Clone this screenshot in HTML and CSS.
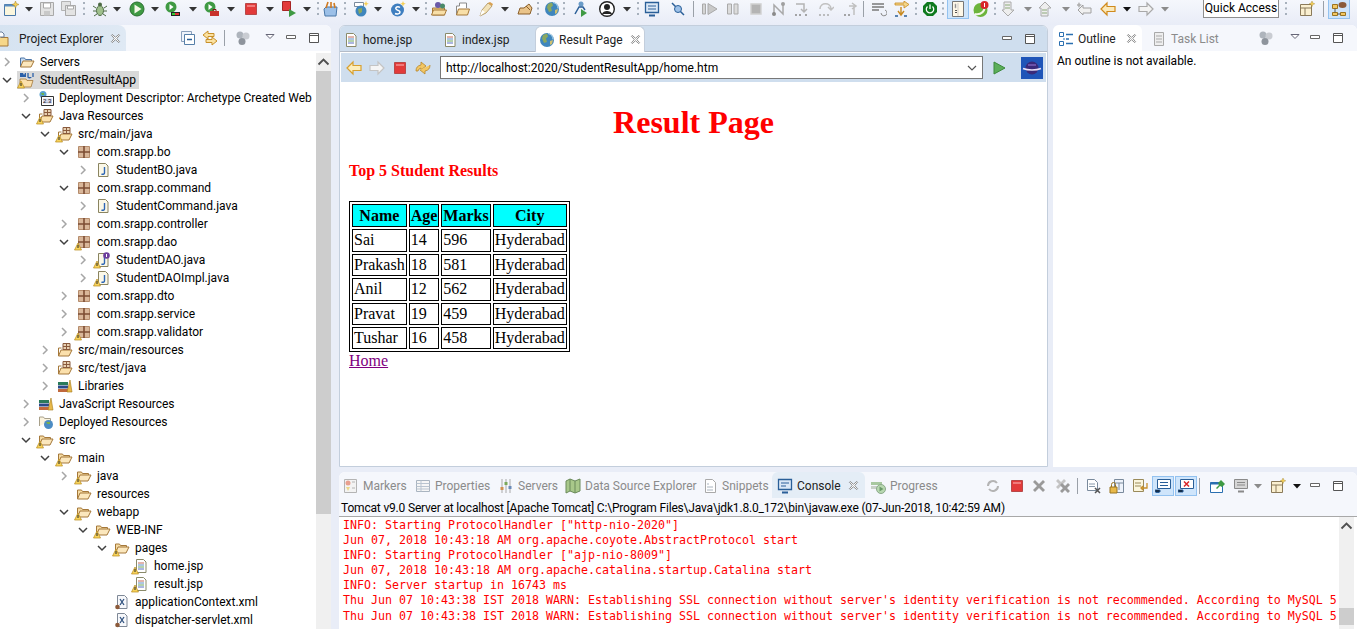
FILE: index.html
```html
<!DOCTYPE html>
<html lang="en">
<head>
    <meta charset="UTF-8">
    <title>Eclipse - Result Page</title>
    <link rel="stylesheet" href="styles.css">
</head>
<body>

<svg class="sprites" xmlns="http://www.w3.org/2000/svg">
    <symbol id="dd" viewBox="0 0 16 16"><path d="M4 6h8l-4 4.500z" fill="#333"/></symbol>
    <symbol id="ddk" viewBox="0 0 16 16"><path d="M4 6h8l-4 4.500z" fill="#111"/></symbol>
    <symbol id="ddg" viewBox="0 0 16 16"><path d="M4 6h8l-4 4.500z" fill="#8b8b8b"/></symbol>
    <symbol id="ddo" viewBox="0 0 16 16"><path d="M4 4.500h8l-4 4z" fill="#fff" stroke="#667"/></symbol>
    <symbol id="dots" viewBox="0 0 16 16"><path d="M8 1v15" stroke="#8f9aa8" stroke-width="1.500" stroke-dasharray="2 3.500"/></symbol>
    <symbol id="sep" viewBox="0 0 16 16"><path d="M8.500 -1v18" stroke="#9aa0a8"/></symbol>
    <symbol id="min" viewBox="0 0 16 16"><path d="M3.500 5.500h9v3h-9z" fill="#fff" stroke="#666"/></symbol>
    <symbol id="max" viewBox="0 0 16 16"><path d="M3.500 3.500h9v9h-9z" fill="#fff" stroke="#555"/><path d="M3.500 5.500h9" stroke="#555"/></symbol>
    <symbol id="close" viewBox="0 0 16 16"><path d="M4 3l4 3.500L12 3l1 1-3.500 4 3.500 4-1 1-4-3.500L4 13l-1-1 3.500-4L3 4z" fill="#fff" stroke="#777"/></symbol>
    <symbol id="chr" viewBox="0 0 12 12"><path d="M4 2l4 4-4 4" fill="none" stroke="#a6a6a6" stroke-width="1.500"/></symbol>
    <symbol id="chd" viewBox="0 0 12 12"><path d="M2 4l4 4 4-4" fill="none" stroke="#404040" stroke-width="1.500"/></symbol>
    <symbol id="chu" viewBox="0 0 12 12"><path d="M2 8l4-4 4 4" fill="none" stroke="#505050" stroke-width="1.500"/></symbol>
    <symbol id="warn" viewBox="0 0 16 16"><path d="M4 8L7.500 15H.5z" fill="#f7d35c" stroke="#b88a1b" stroke-width=".7"/><path d="M4 10v3" stroke="#222"/></symbol>

    <symbol id="folder" viewBox="0 0 16 16"><path d="M1.500 13V4h4l1 1.500h6V7" fill="#f6dca4" stroke="#a5783a"/><path d="M1.500 13l2.500-6h11l-3 6z" fill="#fbe7bd" stroke="#a5783a"/></symbol>
    <symbol id="folderb" viewBox="0 0 16 16"><path d="M1.500 13V4h4l1 1.500h6V7" fill="#c7dbf1" stroke="#4d76a8"/><path d="M1.500 13l2.500-6h11l-3 6z" fill="#fbe7bd" stroke="#a5783a"/></symbol>
    <symbol id="srcf" viewBox="0 0 16 16"><path d="M1.500 14l2.500-6h11l-3 6z" fill="#fbe0ac" stroke="#a5783a"/><path d="M1.500 14V6h3" fill="none" stroke="#a5783a"/><path d="M6 1.500h7v6H6zM6 4.500h7M9.500 1.500v6" fill="#e9d2b4" stroke="#8a5a3c"/></symbol>
    <symbol id="pkg" viewBox="0 0 16 16"><path d="M2.500 2.500h11v11h-11z" fill="#d9b79a" stroke="#b58c6c"/><path d="M2 8h12M8 2v12" stroke="#7c4d34" stroke-width="1.600"/></symbol>
    <symbol id="jfile" viewBox="0 0 16 16"><path d="M3.500 1.500h7l2.500 2.500v10.500h-9.500z" fill="#fbf8e8" stroke="#8a8460"/><path d="M9.500 5v6c0 1.500-2 1.500-3 1" fill="none" stroke="#2e66b5" stroke-width="1.400"/></symbol>
    <symbol id="jint" viewBox="0 0 16 16"><use href="#jfile"/><circle cx="11.500" cy="3.500" r="3.300" fill="#6c3d9c"/><path d="M11.500 2v3" stroke="#fff"/></symbol>
    <symbol id="jsp" viewBox="0 0 16 16"><path d="M3.500 1.500h7l2.500 2.500v10.500h-9.500z" fill="#fff" stroke="#8a8a6a"/><path d="M5 5h6" stroke="#c66b5a"/><path d="M5 7h6" stroke="#5a8fc6"/><path d="M5 9h6" stroke="#6aa55a"/><path d="M5 11h6" stroke="#5a6fc6"/></symbol>
    <symbol id="xml" viewBox="0 0 16 16"><path d="M3.500 1.500h7l2.500 2.500v10.500h-9.500z" fill="#f7f8fb" stroke="#7e8896"/><path d="M6 5l4 6M10 5l-4 6" stroke="#30527f" stroke-width="1.300"/><circle cx="3.500" cy="13" r="2.300" fill="#8c5a3a"/></symbol>
    <symbol id="books" viewBox="0 0 16 16"><path d="M1 4h10v3H1z" fill="#2a7a5a"/><path d="M1 7.500h10v3H1z" fill="#2a4a8a"/><path d="M1 11h10v3H1z" fill="#c0683c"/><path d="M10 14l3-12 2 12z" fill="#e8b94a" stroke="#a57a1a" stroke-width=".6"/></symbol>
    <symbol id="deploy" viewBox="0 0 16 16"><circle cx="5" cy="4.500" r="3.500" fill="#5aa2d0"/><path d="M3 3h3v2H4z" fill="#6cb04c"/><path d="M3.500 6.500h12v9h-12z" fill="#fff" stroke="#333"/><path d="M5 8.500h9v5H5z" fill="#d8d8e8"/><text x="5" y="13.200" font-size="6" font-family="Liberation Sans" fill="#112">2.3</text></symbol>
    <symbol id="dep" viewBox="0 0 16 16"><path d="M1.500 12V3h4l1 1.500h6V7" fill="#fbf3dd" stroke="#a8a08a"/><circle cx="10.500" cy="10.500" r="4.500" fill="#4c8cc4"/><path d="M8 8h4v2H9.500z" fill="#7ab04c"/></symbol>
    <symbol id="app" viewBox="0 0 16 16"><path d="M1 7h6l1 1.500h6L12 15H1z" fill="#fbe0ac" stroke="#a5783a" stroke-width=".8"/><path d="M1 1h3l1 2 1-2h1v4H1z" fill="#2a5fa8"/><path d="M9 1v4c0 1 3 1 3 0M14 1v4" fill="none" stroke="#2a5fa8" stroke-width="1.300"/></symbol>
    <symbol id="project" viewBox="0 0 16 16"><path d="M-3 5h6l1 1.500h7V15H-3z" fill="#f6d78a" stroke="#a5783a"/><path d="M0 1h5l2 2v3H0z" fill="#fff" stroke="#6a7f9c"/></symbol>

    <symbol id="globe" viewBox="0 0 16 16"><circle cx="8" cy="8" r="7" fill="#3f86bd"/><path d="M4 3l4-1.500 1 3-2 2 1 3.500-3 1-2-4.500z" fill="#8aa860"/><path d="M11 9l3-1-1 4-2 1z" fill="#d0c070"/><path d="M9 1.500c3 .5 5 3 5 6" fill="none" stroke="#b4d8ee"/></symbol>
    <symbol id="newwin" viewBox="0 0 16 16"><path d="M1.500 3.500h11v11h-11z" fill="#fbf6dd" stroke="#4a78a8"/><path d="M1.500 3.500h11v2h-11z" fill="#5a8cc0"/><path d="M12.500 0l1 2.500 2.500 1-2.500 1-1 2.500-1-2.500-2.500-1 2.500-1z" fill="#f5cf55" stroke="#a5852a" stroke-width=".5"/></symbol>
    <symbol id="save" viewBox="0 0 16 16"><path d="M1.500 1.500h13v13h-13z" fill="#e3e3e3" stroke="#a9a9a9"/><path d="M4.500 2h7v5h-7z" fill="#fff" stroke="#a9a9a9"/><path d="M5 10h6v4.500H5z" fill="#c9c9c9"/></symbol>
    <symbol id="saveall" viewBox="0 0 16 16"><path d="M.5 .5h9v9h-9z" fill="#e3e3e3" stroke="#b3b3b3"/><path d="M4.500 4.500h10v10h-10z" fill="#e3e3e3" stroke="#a9a9a9"/><path d="M6.500 5h6v3h-6z" fill="#fff" stroke="#a9a9a9"/></symbol>
    <symbol id="bug" viewBox="0 0 16 16"><ellipse cx="8" cy="9.500" rx="3.500" ry="5" fill="#9fc08c" stroke="#4c6a44"/><circle cx="8" cy="3.500" r="2" fill="#4c6a44"/><path d="M1 5l3 2M15 5l-3 2M1 10h3M15 10h-3M2 15l3-2M14 15l-3-2" stroke="#4c6a44"/></symbol>
    <symbol id="run" viewBox="0 0 16 16"><circle cx="8" cy="8" r="7" fill="#3f9a43" stroke="#2a6f30"/><path d="M5.500 3.500l7 4.500-7 4.500z" fill="#f4f8e8"/></symbol>
    <symbol id="cov" viewBox="0 0 16 16"><circle cx="6" cy="6" r="5.500" fill="#3f9a43"/><path d="M4.500 3l4 3-4 3z" fill="#fff"/><path d="M6 11h9v4H6z" fill="#222"/><path d="M7 12h3v2H7z" fill="#3c3"/><path d="M10 12h4v2h-4z" fill="#d33"/></symbol>
    <symbol id="tool" viewBox="0 0 16 16"><circle cx="6" cy="6" r="5.500" fill="#3f9a43"/><path d="M4.500 3l4 3-4 3z" fill="#fff"/><path d="M6 10h9v5H6z" fill="#c8322c"/><path d="M9 10V8.500h3V10" fill="none" stroke="#7a1a16"/></symbol>
    <symbol id="stop" viewBox="0 0 16 16"><path d="M2.500 2.500h11v11h-11z" fill="#e23a3a" stroke="#b84848"/><path d="M4 4h8v2H4z" fill="#f07a7a"/></symbol>
    <symbol id="stopgo" viewBox="0 0 16 16"><path d="M1.500 .5h8v9h-8z" fill="#e23a3a" stroke="#a82424"/><path d="M8 8l7 4-7 4z" fill="#3f9a43"/></symbol>
    <symbol id="ant" viewBox="0 0 16 16"><path d="M1 8l2-2h11l-1 9H2z" fill="#9cc0e8" stroke="#4a78a8"/><path d="M5 1l-2 6M8 1v6M11 2l1 5" stroke="#d07a20" stroke-width="1.600"/></symbol>
    <symbol id="globenew" viewBox="0 0 16 16"><path d="M1.500 1.500h9v4h-9z" fill="#fff" stroke="#7a8a9c"/><circle cx="8" cy="10" r="5.500" fill="#3f86bd"/><path d="M5 8l4-1v4l-3 2z" fill="#8aa860"/><path d="M13 0l.8 2 2 .8-2 .8-.8 2-.8-2-2-.8 2-.8z" fill="#f5cf55"/></symbol>
    <symbol id="snew" viewBox="0 0 16 16"><circle cx="7.500" cy="9" r="6.500" fill="#3f7fc0"/><path d="M10 6.500C8 5 5 6 6 8s4 1 4 3-3 2.500-5 1.500" fill="none" stroke="#fff" stroke-width="1.500"/><path d="M13 0l.8 2 2 .8-2 .8-.8 2-.8-2-2-.8 2-.8z" fill="#f5cf55"/></symbol>
    <symbol id="fpurple" viewBox="0 0 16 16"><path d="M1.500 14V7h12v7z" fill="#f2cf84" stroke="#a5783a"/><circle cx="7" cy="4" r="3" fill="#6a5aa8"/><circle cx="11.500" cy="5" r="2.500" fill="#4a8a6a"/><path d="M.5 14l2-5h13l-2 5z" fill="#f8dfa8" stroke="#a5783a"/></symbol>
    <symbol id="fopen" viewBox="0 0 16 16"><path d="M1.500 14V5h3V2h7v5" fill="#fff" stroke="#8a8a8a"/><path d="M1.500 14l2-6h11l-2 6z" fill="#f8dfa8" stroke="#a5783a"/></symbol>
    <symbol id="pen" viewBox="0 0 16 16"><path d="M2 15l2-6 6-7 4 3-6 7z" fill="#f3e3b8" stroke="#b8a070"/><path d="M10 2l4 3 1-2-3-2z" fill="#d8a050"/><path d="M2 15l2-6 3 2z" fill="#fff"/></symbol>
    <symbol id="ftag" viewBox="0 0 16 16"><path d="M1 13l2-6h4l5-4 3 4-2 6z" fill="#eac48a" stroke="#8a5f2a"/><path d="M9 5l4 4" stroke="#8a5f2a"/></symbol>
    <symbol id="runp" viewBox="0 0 16 16"><circle cx="9" cy="3" r="2.500" fill="#6a9cc8"/><path d="M3 13l4-7h4l2 3" fill="none" stroke="#2a5f98" stroke-width="1.500"/><path d="M9 8l6 4-6 4z" fill="#3f9a43"/></symbol>
    <symbol id="person" viewBox="0 0 16 16"><circle cx="8" cy="8" r="7.300" fill="#fff" stroke="#222" stroke-width="1.400"/><circle cx="8" cy="6" r="3" fill="#222"/><path d="M3 13c1-4 9-4 10 0z" fill="#222"/></symbol>
    <symbol id="monitor" viewBox="0 0 16 16"><path d="M1.500 1.500h13v10h-13z" fill="#dbe8f6" stroke="#2a5f98" stroke-width="1.300"/><path d="M4 5h8M4 8h8" stroke="#2a5f98"/><path d="M5 14.500h6" stroke="#2a5f98" stroke-width="2"/></symbol>
    <symbol id="slash" viewBox="0 0 16 16"><path d="M2 2l12 12" stroke="#2a5f98" stroke-width="1.500"/><circle cx="8" cy="8" r="3.500" fill="#9cc0e8" stroke="#2a5f98"/></symbol>

    <symbol id="resume" viewBox="0 0 16 16"><path d="M.5 3h3v10h-3z" fill="#d4d4d4" stroke="#a9a9a9"/><path d="M6 2.500l9 5.500-9 5.500z" fill="#c9c9c9" stroke="#a9a9a9"/></symbol>
    <symbol id="pause" viewBox="0 0 16 16"><path d="M2.500 3h4v10h-4zM9 3h4v10H9z" fill="#dcdcdc" stroke="#a9a9a9"/></symbol>
    <symbol id="stopg" viewBox="0 0 16 16"><path d="M3 3h10v10H3z" fill="#b4b4b4" stroke="#d0d0d0" stroke-width="1.400"/></symbol>
    <symbol id="disc" viewBox="0 0 16 16"><path d="M3 14V4l9 9V2" fill="none" stroke="#a9a9a9" stroke-width="1.500"/><circle cx="12" cy="3" r="2" fill="#a0a0a0"/><circle cx="3" cy="13" r="2" fill="#8a8a8a"/></symbol>
    <symbol id="stepin" viewBox="0 0 16 16"><path d="M2 3h8v7M7 8l3 3 3-3" fill="none" stroke="#b4b4b4" stroke-width="1.500"/><path d="M1 14h2M5 14h2M11 14h2" stroke="#8a8a8a" stroke-width="1.500"/></symbol>
    <symbol id="stepov" viewBox="0 0 16 16"><path d="M2 8c0-7 11-7 11 0M10 6l3 3 3-3" fill="none" stroke="#c0c0c0" stroke-width="1.500"/><path d="M1 14h2M5 14h2M9 14h2" stroke="#aaa" stroke-width="1.500"/></symbol>
    <symbol id="stepret" viewBox="0 0 16 16"><path d="M11 14V5H6M9 2l4 3-4 3" fill="none" stroke="#c0c0c0" stroke-width="1.500"/><path d="M1 14h2M5 14h2" stroke="#8a8a8a" stroke-width="1.500"/></symbol>
    <symbol id="lines" viewBox="0 0 16 16"><path d="M1 3h12M1 6h12M1 9h7" stroke="#7a7a7a" stroke-width="1.500"/><path d="M10 12a3 3 0 1 0 4-3" fill="none" stroke="#8a8a8a"/></symbol>
    <symbol id="ostep" viewBox="0 0 16 16"><path d="M1 4h9v3l5-3.500L10 0v2H1z" fill="#f3d68a" stroke="#c88a20" stroke-width=".8"/><path d="M7 6v7M4 10l3 4 3-4" fill="none" stroke="#c88a20" stroke-width="1.400"/><path d="M1 15h3M10 15h3" stroke="#2a5f98" stroke-width="1.400"/></symbol>
    <symbol id="power" viewBox="0 0 16 16"><path d="M5 1h6l4 4v6l-4 4H5l-4-4V5z" fill="#0f7a1e"/><path d="M5.500 5.500a3.700 3.700 0 1 0 5 0M8 3.500v4.500" fill="none" stroke="#fff" stroke-width="1.300"/></symbol>
    <symbol id="numbered" viewBox="0 0 16 16"><path d="M2.500 .5h11v15h-11z" fill="#fff8e8" stroke="#777"/><path d="M5 3h1v4H5zM8 2v13" fill="#555" stroke="#bbb" stroke-width=".7"/><path d="M5 9h2v1H5zM5 11h2v1H5z" fill="#555"/></symbol>
    <symbol id="spring" viewBox="0 0 16 16"><circle cx="7.500" cy="9" r="7" fill="#6cb43c"/><path d="M2 13c6 1 9-2 10-7" fill="none" stroke="#f4f8e8" stroke-width="2"/><circle cx="11.500" cy="4" r="4" fill="#d8262a"/><path d="M11.500 2v4" stroke="#fff"/></symbol>
    <symbol id="down" viewBox="0 0 16 16"><path d="M3 1h7v8h3l-6 6-6-6h2z" fill="#eee" stroke="#aaa"/><path d="M4 4h5M4 7h5" stroke="#8aa878"/></symbol>
    <symbol id="up" viewBox="0 0 16 16"><path d="M3 15h7V7h3L7 1 1 7h2z" fill="#eee" stroke="#aaa"/><path d="M4 9h5M4 12h5" stroke="#8aa878"/></symbol>
    <symbol id="backg" viewBox="0 0 16 16"><path d="M1 9l5-5v3h8v5H6v2z" fill="#f0f0f0" stroke="#a0a0a0"/><path d="M2 1l1 2 2 1-2 1-1 2-1-2-2-1 2-1z" fill="#b0b0b0"/></symbol>
    <symbol id="left" viewBox="0 0 16 16"><path d="M1 8l6-6v3.500h8v5H7V14z" fill="#fbe9ba" stroke="#d08a1c" stroke-width="1.200"/></symbol>
    <symbol id="right" viewBox="0 0 16 16"><path d="M15 8L9 2v3.500H1v5h8V14z" fill="#f3f3f3" stroke="#a9a9a9" stroke-width="1.200"/></symbol>
    <symbol id="perspective" viewBox="0 0 16 16"><path d="M1.500 3.500h11v11h-11z" fill="#fbf0d0" stroke="#8a7a5a"/><path d="M1.500 7h11M6 7v7.500" stroke="#8a7a5a"/><path d="M13 0l.8 2 2 .8-2 .8-.8 2-.8-2-2-.8 2-.8z" fill="#f5cf55" stroke="#a5852a" stroke-width=".4"/></symbol>
    <symbol id="jee" viewBox="0 0 16 16"><path d="M1.500 3.500h5v4h-5zM1.500 11.500h5v3h-5zM9.500 11.500h5v3h-5z" fill="#f3c763" stroke="#9a7420"/><path d="M4 7.500v4M6.500 13h3" stroke="#555"/><ellipse cx="11.500" cy="4" rx="4" ry="3" fill="#8a5a3a"/></symbol>

    <symbol id="collapse" viewBox="0 0 16 16"><path d="M1.500 1.500h10v10h-10z" fill="#eef3fb" stroke="#8aa0bc"/><path d="M4.500 4.500h10v10h-10z" fill="#fff" stroke="#567fa8"/><path d="M7 9.500h5" stroke="#2a5f98" stroke-width="1.400"/></symbol>
    <symbol id="link" viewBox="0 0 16 16"><path d="M1 5l5-4v2.500h6v3H6V9z" fill="#fbe2a2" stroke="#c8902a"/><path d="M15 11l-5-4v2.500H4v3h6V15z" fill="#fbe2a2" stroke="#c8902a"/></symbol>
    <symbol id="balls" viewBox="0 0 16 16"><circle cx="5" cy="5" r="3.500" fill="#aeb4bc"/><circle cx="11" cy="6" r="3.500" fill="#c9ccd2"/><circle cx="7" cy="11.500" r="3.500" fill="#8e949c"/></symbol>
    <symbol id="outline" viewBox="0 0 16 16"><path d="M1.500 1.500h4v4h-4zM1.500 10.500h4v4h-4z" fill="#fff" stroke="#2a6fb0"/><path d="M8 3.500h7M8 8h3M8 12.500h7" stroke="#2a6fb0" stroke-width="1.300"/><path d="M5 8h2" stroke="#2a6fb0"/></symbol>
    <symbol id="task" viewBox="0 0 16 16"><path d="M3.500 1.500h9v13h-9z" fill="#eee" stroke="#a9a9a9"/><path d="M5 5h6M5 8h6M5 11h6" stroke="#a9a9a9"/></symbol>
    <symbol id="markers" viewBox="0 0 16 16"><path d="M1.500 1.500h12v13h-12z" fill="#f3f3f3" stroke="#b4b4b4"/><circle cx="5" cy="5" r="2.500" fill="#e8a090"/><path d="M3 9h4l-2 4z" fill="#ecd88a"/><path d="M9 4h3M9 10h3" stroke="#b4b4b4"/></symbol>
    <symbol id="props" viewBox="0 0 16 16"><path d="M1.500 2.500h13v11h-13z" fill="#f6f6f6" stroke="#a9b4c0"/><path d="M1.500 5.500h13M1.500 8.500h13M1.500 11h13M6 2.500v11" stroke="#b9c4d0"/></symbol>
    <symbol id="servers" viewBox="0 0 16 16"><path d="M4 1v14M8 1v14M12 1v14" stroke="#a9a9a9"/><path d="M2.500 9h3v3h-3z" fill="#d09050"/><path d="M6.500 4h3v3h-3z" fill="#7aa85a"/><path d="M10.500 8h3v3h-3z" fill="#6a8ab8"/></symbol>
    <symbol id="dse" viewBox="0 0 16 16"><path d="M1 3l4-2 5 2 5-2v12l-5 2-5-2-4 2z" fill="#a8c88a" stroke="#6a8a5a"/><path d="M5 1v12M10 3v12" stroke="#6a8a5a"/></symbol>
    <symbol id="snip" viewBox="0 0 16 16"><path d="M3.500 1.500h7l3 3v10h-10z" fill="#fff" stroke="#a9a9a9"/><path d="M5 6h2M5 9h6M5 12h6" stroke="#a9b4c0"/></symbol>
    <symbol id="console" viewBox="0 0 16 16"><path d="M1.500 1.500h13v10h-13z" fill="#dbe8f6" stroke="#2a5f98" stroke-width="1.300"/><path d="M4 5h8M4 8h5" stroke="#2a5f98"/><path d="M5 14.500h6" stroke="#2a5f98" stroke-width="2"/></symbol>
    <symbol id="progress" viewBox="0 0 16 16"><path d="M1 4h11v3H1z" fill="#a8c8a0"/><path d="M1 8h6v3H1z" fill="#c8d0c8"/><circle cx="11" cy="11" r="4.500" fill="#b8d8b0" stroke="#8aa88a"/><path d="M9.500 8.500l4 2.500-4 2.500z" fill="#6a9a6a"/></symbol>
    <symbol id="sync" viewBox="0 0 16 16"><path d="M3 8a5 5 0 0 1 9-3M13 8a5 5 0 0 1-9 3" fill="none" stroke="#b4b4b4" stroke-width="2"/></symbol>
    <symbol id="xg" viewBox="0 0 16 16"><path d="M2 4l2-2 4 4 4-4 2 2-4 4 4 4-2 2-4-4-4 4-2-2 4-4z" fill="#9a9a9a"/></symbol>
    <symbol id="xxg" viewBox="0 0 16 16"><path d="M1 3l2-2 3 3 3-3 2 2-3 3 3 3-2 2-3-3-3 3-2-2 3-3z" fill="#c4c4c4"/><path d="M5 7l2-2 3 3 3-3 2 2-3 3 3 3-2 2-3-3-3 3-2-2 3-3z" fill="#9a9a9a"/></symbol>
    <symbol id="cdoc" viewBox="0 0 16 16"><path d="M2.500 1.500h7l3 3v8h-10z" fill="#fff" stroke="#7a8a9c"/><path d="M4 6h6M4 8.500h6" stroke="#8a9aac"/><path d="M10 10l5 5M15 10l-5 5" stroke="#555" stroke-width="1.500"/></symbol>
    <symbol id="clock" viewBox="0 0 16 16"><path d="M5.500 1.500h9v13h-9z" fill="#eef3fb" stroke="#7a8a9c"/><path d="M10 5v7M5.500 5h9" stroke="#7a8a9c"/><path d="M1 9h7v6H1z" fill="#e8b94a" stroke="#9a7420"/><path d="M2.500 9V6.500a2 2 0 0 1 4 0V9" fill="none" stroke="#9a7420"/></symbol>
    <symbol id="cword" viewBox="0 0 16 16"><path d="M1.500 1.500h10v12h-10z" fill="#fbf6dd" stroke="#9a8a5a"/><path d="M3 5h6M3 8h6" stroke="#9a8a5a"/><path d="M15 5v5H9M11 8l-2 2 2 2" fill="none" stroke="#c8902a" stroke-width="1.300"/></symbol>
    <symbol id="cout" viewBox="0 0 16 16"><path d="M2.500 1.500h13v9h-13z" fill="#fff" stroke="#2a5f98"/><path d="M5 4.500h8M5 7.500h8" stroke="#2a5f98"/><path d="M0 12h5v2H0zM1 14.500h3" stroke="#2a5f98"/></symbol>
    <symbol id="cerr" viewBox="0 0 16 16"><path d="M2.500 1.500h13v9h-13z" fill="#fff" stroke="#2a5f98"/><path d="M6 3.500l5 5M11 3.500l-5 5" stroke="#d8262a" stroke-width="1.500"/><path d="M0 12h5v2H0z" stroke="#2a5f98"/></symbol>
    <symbol id="pin" viewBox="0 0 16 16"><path d="M1.500 4.500h12v10h-12z" fill="#fff" stroke="#2a6fb0"/><path d="M1.500 4.500h12v2h-12z" fill="#2a6fb0"/><path d="M7 10l3-3-1-2 3-3 4 4-3 3-2-1-3 3z" fill="#3f9a43"/></symbol>
    <symbol id="dispg" viewBox="0 0 16 16"><path d="M1.500 1.500h13v9h-13z" fill="#d6d6d6" stroke="#8a8a8a"/><path d="M4 4.500h8M4 7h8" stroke="#8a8a8a"/><path d="M5 13.500h6" stroke="#8a8a8a" stroke-width="2"/></symbol>
    <symbol id="back" viewBox="0 0 16 16"><path d="M1 8l6-6v3.500h8v5H7V14z" fill="#fdeebc" stroke="#d8a030" stroke-width="1.200"/></symbol>
    <symbol id="fwd" viewBox="0 0 16 16"><path d="M15 8L9 2v3.500H1v5h8V14z" fill="#f5f5f5" stroke="#c4c4c4" stroke-width="1.200"/></symbol>
    <symbol id="refresh" viewBox="0 0 16 16"><path d="M1 11a6 6 0 0 1 5-6V2l5 4-5 4V8a4 4 0 0 0-3 3z" fill="#f3c763" stroke="#b8862a" stroke-width=".8"/><path d="M15 5a6 6 0 0 1-5 6v3l-5-4" fill="#f3c763" stroke="#b8862a" stroke-width=".8"/></symbol>
    <symbol id="go" viewBox="0 0 16 16"><path d="M3 2l11 6-11 6z" fill="#5cae5a" stroke="#3a8a3a"/></symbol>
    <symbol id="eclipse" viewBox="0 0 22 22"><path d="M0 0h22v22H0z" fill="#1f55b8"/><circle cx="11" cy="11" r="6.500" fill="#3a2a7a"/><path d="M2 11.500c5 2 13 2 18 0" fill="none" stroke="#e8e0f8" stroke-width="1.500"/><path d="M7 8h8" stroke="#9a7ad8"/></symbol>
</svg>

<div class="ide">
    <div class="toolbar">
        <div class="tool-icons">
            <svg class="ic"><use href="#newwin"/></svg><svg class="ic"><use href="#dd"/></svg><svg class="ic"><use href="#save"/></svg><svg class="ic"><use href="#saveall"/></svg><svg class="ic"><use href="#dots"/></svg>
            <svg class="ic"><use href="#bug"/></svg><svg class="ic"><use href="#dd"/></svg><svg class="ic"><use href="#run"/></svg><svg class="ic"><use href="#dd"/></svg><svg class="ic"><use href="#cov"/></svg><svg class="ic"><use href="#dd"/></svg><svg class="ic"><use href="#tool"/></svg><svg class="ic"><use href="#dd"/></svg><svg class="ic"><use href="#stop"/></svg><svg class="ic"><use href="#dd"/></svg><svg class="ic"><use href="#stopgo"/></svg><svg class="ic"><use href="#dd"/></svg><svg class="ic"><use href="#dots"/></svg>
            <svg class="ic"><use href="#ant"/></svg><svg class="ic"><use href="#dots"/></svg>
            <svg class="ic"><use href="#globenew"/></svg><svg class="ic"><use href="#dd"/></svg><svg class="ic"><use href="#snew"/></svg><svg class="ic"><use href="#dd"/></svg><svg class="ic"><use href="#dots"/></svg>
            <svg class="ic"><use href="#fpurple"/></svg><svg class="ic"><use href="#fopen"/></svg><svg class="ic"><use href="#pen"/></svg><svg class="ic"><use href="#dd"/></svg><svg class="ic"><use href="#ftag"/></svg><svg class="ic"><use href="#dots"/></svg>
            <svg class="ic"><use href="#globe"/></svg><svg class="ic"><use href="#dots"/></svg>
            <svg class="ic"><use href="#runp"/></svg><svg class="ic"><use href="#person"/></svg><svg class="ic"><use href="#dd"/></svg><svg class="ic"><use href="#dots"/></svg>
            <svg class="ic"><use href="#monitor"/></svg><svg class="ic"><use href="#slash"/></svg><svg class="ic"><use href="#sep"/></svg>
            <svg class="ic"><use href="#resume"/></svg><svg class="ic"><use href="#pause"/></svg><svg class="ic"><use href="#stopg"/></svg><svg class="ic"><use href="#disc"/></svg><svg class="ic"><use href="#stepin"/></svg><svg class="ic"><use href="#stepov"/></svg><svg class="ic"><use href="#stepret"/></svg><svg class="ic"><use href="#sep"/></svg>
            <svg class="ic"><use href="#lines"/></svg><svg class="ic"><use href="#ostep"/></svg><svg class="ic"><use href="#dots"/></svg>
            <svg class="ic"><use href="#power"/></svg><svg class="ic"><use href="#dots"/></svg>
            <span class="toggle"><svg class="ic"><use href="#numbered"/></svg></span><svg class="ic"><use href="#spring"/></svg><svg class="ic"><use href="#dots"/></svg>
            <svg class="ic"><use href="#down"/></svg><svg class="ic"><use href="#ddg"/></svg><svg class="ic"><use href="#up"/></svg><svg class="ic"><use href="#ddg"/></svg><svg class="ic"><use href="#backg"/></svg><svg class="ic"><use href="#left"/></svg><svg class="ic"><use href="#ddk"/></svg><svg class="ic"><use href="#right"/></svg><svg class="ic"><use href="#ddg"/></svg>
        </div>
        <div class="quick-access">Quick Access</div>
        <svg class="ic"><use href="#dots"/></svg>
        <svg class="ic perspective"><use href="#perspective"/></svg>
        <svg class="ic"><use href="#sep"/></svg>
        <span class="toggle"><svg class="ic"><use href="#jee"/></svg></span>
    </div>

    <div class="workspace">
        <section class="panel explorer">
            <div class="tabbar">
                <div class="tab active first"><svg class="ic"><use href="#project"/></svg><span>Project Explorer</span><svg class="ic x"><use href="#close"/></svg></div>
                <div class="view-tools explorer-tools">
                    <svg class="ic"><use href="#collapse"/></svg><svg class="ic"><use href="#link"/></svg><svg class="ic"><use href="#sep"/></svg><svg class="ic"><use href="#balls"/></svg><svg class="ic"><use href="#ddo"/></svg><svg class="ic"><use href="#min"/></svg><svg class="ic"><use href="#max"/></svg>
                </div>
            </div>
            <div class="tree-wrap">
                <ul class="tree">
                    <li class="row"><svg class="ch"><use href="#chr"/></svg><svg class="ic"><use href="#folderb"/></svg><span>Servers</span></li>
                    <li class="row"><svg class="ch"><use href="#chd"/></svg><span class="iw"><svg class="ic"><use href="#app"/></svg><svg class="ic w"><use href="#warn"/></svg></span><span class="selected">StudentResultApp</span></li>
                    <li class="row l1"><svg class="ch"><use href="#chr"/></svg><svg class="ic"><use href="#deploy"/></svg><span>Deployment Descriptor: Archetype Created Web</span></li>
                    <li class="row l1"><svg class="ch"><use href="#chd"/></svg><span class="iw"><svg class="ic"><use href="#srcf"/></svg><svg class="ic w"><use href="#warn"/></svg></span><span>Java Resources</span></li>
                    <li class="row l2"><svg class="ch"><use href="#chd"/></svg><span class="iw"><svg class="ic"><use href="#srcf"/></svg><svg class="ic w"><use href="#warn"/></svg></span><span>src/main/java</span></li>
                    <li class="row l3"><svg class="ch"><use href="#chd"/></svg><svg class="ic"><use href="#pkg"/></svg><span>com.srapp.bo</span></li>
                    <li class="row l4"><svg class="ch"><use href="#chr"/></svg><svg class="ic"><use href="#jfile"/></svg><span>StudentBO.java</span></li>
                    <li class="row l3"><svg class="ch"><use href="#chd"/></svg><svg class="ic"><use href="#pkg"/></svg><span>com.srapp.command</span></li>
                    <li class="row l4"><svg class="ch"><use href="#chr"/></svg><svg class="ic"><use href="#jfile"/></svg><span>StudentCommand.java</span></li>
                    <li class="row l3"><svg class="ch"><use href="#chr"/></svg><svg class="ic"><use href="#pkg"/></svg><span>com.srapp.controller</span></li>
                    <li class="row l3"><svg class="ch"><use href="#chd"/></svg><span class="iw"><svg class="ic"><use href="#pkg"/></svg><svg class="ic w"><use href="#warn"/></svg></span><span>com.srapp.dao</span></li>
                    <li class="row l4"><svg class="ch"><use href="#chr"/></svg><span class="iw"><svg class="ic"><use href="#jint"/></svg><svg class="ic w"><use href="#warn"/></svg></span><span>StudentDAO.java</span></li>
                    <li class="row l4"><svg class="ch"><use href="#chr"/></svg><span class="iw"><svg class="ic"><use href="#jfile"/></svg><svg class="ic w"><use href="#warn"/></svg></span><span>StudentDAOImpl.java</span></li>
                    <li class="row l3"><svg class="ch"><use href="#chr"/></svg><svg class="ic"><use href="#pkg"/></svg><span>com.srapp.dto</span></li>
                    <li class="row l3"><svg class="ch"><use href="#chr"/></svg><svg class="ic"><use href="#pkg"/></svg><span>com.srapp.service</span></li>
                    <li class="row l3"><svg class="ch"><use href="#chr"/></svg><span class="iw"><svg class="ic"><use href="#pkg"/></svg><svg class="ic w"><use href="#warn"/></svg></span><span>com.srapp.validator</span></li>
                    <li class="row l2"><svg class="ch"><use href="#chr"/></svg><svg class="ic"><use href="#srcf"/></svg><span>src/main/resources</span></li>
                    <li class="row l2"><svg class="ch"><use href="#chr"/></svg><svg class="ic"><use href="#srcf"/></svg><span>src/test/java</span></li>
                    <li class="row l2"><svg class="ch"><use href="#chr"/></svg><svg class="ic"><use href="#books"/></svg><span>Libraries</span></li>
                    <li class="row l1"><svg class="ch"><use href="#chr"/></svg><svg class="ic"><use href="#books"/></svg><span>JavaScript Resources</span></li>
                    <li class="row l1"><svg class="ch"><use href="#chr"/></svg><svg class="ic"><use href="#dep"/></svg><span>Deployed Resources</span></li>
                    <li class="row l1"><svg class="ch"><use href="#chd"/></svg><span class="iw"><svg class="ic"><use href="#folder"/></svg><svg class="ic w"><use href="#warn"/></svg></span><span>src</span></li>
                    <li class="row l2"><svg class="ch"><use href="#chd"/></svg><span class="iw"><svg class="ic"><use href="#folder"/></svg><svg class="ic w"><use href="#warn"/></svg></span><span>main</span></li>
                    <li class="row l3"><svg class="ch"><use href="#chr"/></svg><span class="iw"><svg class="ic"><use href="#folder"/></svg><svg class="ic w"><use href="#warn"/></svg></span><span>java</span></li>
                    <li class="row l3"><span class="ch"></span><svg class="ic"><use href="#folder"/></svg><span>resources</span></li>
                    <li class="row l3"><svg class="ch"><use href="#chd"/></svg><span class="iw"><svg class="ic"><use href="#folder"/></svg><svg class="ic w"><use href="#warn"/></svg></span><span>webapp</span></li>
                    <li class="row l4"><svg class="ch"><use href="#chd"/></svg><span class="iw"><svg class="ic"><use href="#folder"/></svg><svg class="ic w"><use href="#warn"/></svg></span><span>WEB-INF</span></li>
                    <li class="row l5"><svg class="ch"><use href="#chd"/></svg><span class="iw"><svg class="ic"><use href="#folder"/></svg><svg class="ic w"><use href="#warn"/></svg></span><span>pages</span></li>
                    <li class="row l6"><span class="ch"></span><span class="iw"><svg class="ic"><use href="#jsp"/></svg><svg class="ic w"><use href="#warn"/></svg></span><span>home.jsp</span></li>
                    <li class="row l6"><span class="ch"></span><span class="iw"><svg class="ic"><use href="#jsp"/></svg><svg class="ic w"><use href="#warn"/></svg></span><span>result.jsp</span></li>
                    <li class="row l5"><span class="ch"></span><svg class="ic"><use href="#xml"/></svg><span>applicationContext.xml</span></li>
                    <li class="row l5"><span class="ch"></span><svg class="ic"><use href="#xml"/></svg><span>dispatcher-servlet.xml</span></li>
                </ul>
                <div class="vscroll tree-scroll"><svg class="arrow"><use href="#chu"/></svg><div class="thumb"></div></div>
            </div>
        </section>

        <section class="panel editor">
            <div class="tabbar blue">
                <div class="tab file home-tab"><svg class="ic"><use href="#jsp"/></svg><span>home.jsp</span></div>
                <div class="tab file"><svg class="ic"><use href="#jsp"/></svg><span>index.jsp</span></div>
                <div class="tab active result"><svg class="ic"><use href="#globe"/></svg><span>Result Page</span><svg class="ic x"><use href="#close"/></svg></div>
                <div class="view-tools editor-tools"><svg class="ic"><use href="#min"/></svg><svg class="ic"><use href="#max"/></svg></div>
            </div>
            <div class="browser-bar">
                <svg class="ic"><use href="#back"/></svg><svg class="ic"><use href="#fwd"/></svg><svg class="ic"><use href="#stop"/></svg><svg class="ic"><use href="#refresh"/></svg>
                <div class="url"><span>http://localhost:2020/StudentResultApp/home.htm</span><svg class="url-arrow" viewBox="0 0 12 12"><path d="M2 4l4 4 4-4" fill="none" stroke="#555" stroke-width="1.200"/></svg></div>
                <svg class="ic go"><use href="#go"/></svg>
                <svg class="eclipse"><use href="#eclipse"/></svg>
            </div>
            <div class="page">
                <h1>Result Page</h1>
                <h3>Top 5 Student Results</h3>
                <table class="results">
                    <tr><th>Name</th><th>Age</th><th>Marks</th><th>City</th></tr>
                    <tr><td>Sai</td><td>14</td><td>596</td><td>Hyderabad</td></tr>
                    <tr><td>Prakash</td><td>18</td><td>581</td><td>Hyderabad</td></tr>
                    <tr><td>Anil</td><td>12</td><td>562</td><td>Hyderabad</td></tr>
                    <tr><td>Pravat</td><td>19</td><td>459</td><td>Hyderabad</td></tr>
                    <tr><td>Tushar</td><td>16</td><td>458</td><td>Hyderabad</td></tr>
                </table>
                <a class="home-link" href="#">Home</a>
            </div>
        </section>

        <section class="panel outline">
            <div class="tabbar">
                <div class="tab active outline-tab"><svg class="ic"><use href="#outline"/></svg><span>Outline</span><svg class="ic x"><use href="#close"/></svg></div>
                <div class="tab muted task-tab"><svg class="ic"><use href="#task"/></svg><span>Task List</span></div>
                <div class="view-tools outline-tools"><svg class="ic"><use href="#balls"/></svg><svg class="ic"><use href="#ddo"/></svg><svg class="ic"><use href="#min"/></svg><svg class="ic"><use href="#max"/></svg></div>
            </div>
            <p class="no-outline">An outline is not available.</p>
        </section>

        <section class="panel bottom">
            <div class="tabbar">
                <div class="tab muted t-markers"><svg class="ic"><use href="#markers"/></svg><span>Markers</span></div>
                <div class="tab muted t-props"><svg class="ic"><use href="#props"/></svg><span>Properties</span></div>
                <div class="tab muted t-servers"><svg class="ic"><use href="#servers"/></svg><span>Servers</span></div>
                <div class="tab muted t-dse"><svg class="ic"><use href="#dse"/></svg><span>Data Source Explorer</span></div>
                <div class="tab muted t-snip"><svg class="ic"><use href="#snip"/></svg><span>Snippets</span></div>
                <div class="tab active t-console"><svg class="ic"><use href="#console"/></svg><span>Console</span><svg class="ic x"><use href="#close"/></svg></div>
                <div class="tab muted t-progress"><svg class="ic"><use href="#progress"/></svg><span>Progress</span></div>
                <div class="view-tools console-tools">
                    <svg class="ic"><use href="#sync"/></svg><svg class="ic"><use href="#stop"/></svg><svg class="ic"><use href="#xg"/></svg><svg class="ic"><use href="#xxg"/></svg><svg class="ic"><use href="#sep"/></svg><svg class="ic"><use href="#cdoc"/></svg><svg class="ic"><use href="#clock"/></svg><svg class="ic"><use href="#cword"/></svg><span class="toggle"><svg class="ic"><use href="#cout"/></svg></span><span class="toggle"><svg class="ic"><use href="#cerr"/></svg></span><svg class="ic"><use href="#sep"/></svg><svg class="ic"><use href="#pin"/></svg><svg class="ic"><use href="#dispg"/></svg><svg class="ic"><use href="#ddg"/></svg><svg class="ic"><use href="#perspective"/></svg><svg class="ic"><use href="#ddk"/></svg><svg class="ic"><use href="#min"/></svg><svg class="ic"><use href="#max"/></svg>
                </div>
            </div>
            <div class="console-title">Tomcat v9.0 Server at localhost [Apache Tomcat] C:\Program Files\Java\jdk1.8.0_172\bin\javaw.exe (07-Jun-2018, 10:42:59 AM)</div>
            <div class="console-wrap">
                <pre class="console-out">INFO: Starting ProtocolHandler ["http-nio-2020"]
Jun 07, 2018 10:43:18 AM org.apache.coyote.AbstractProtocol start
INFO: Starting ProtocolHandler ["ajp-nio-8009"]
Jun 07, 2018 10:43:18 AM org.apache.catalina.startup.Catalina start
INFO: Server startup in 16743 ms
Thu Jun 07 10:43:38 IST 2018 WARN: Establishing SSL connection without server's identity verification is not recommended. According to MySQL 5
Thu Jun 07 10:43:38 IST 2018 WARN: Establishing SSL connection without server's identity verification is not recommended. According to MySQL 5</pre>
                <div class="vscroll console-scroll"><svg class="arrow"><use href="#chu"/></svg><div class="thumb"></div></div>
            </div>
        </section>
    </div>
</div>

</body>
</html>
```

FILE: styles.css
```css
html, body {
    margin: 0;
    padding: 0;
    height: 100%;
    overflow: hidden;
}

body {
    font-family: Roboto, "Open Sans", sans-serif;
    font-size: 12px;
    color: #000;
    background-color: #e9edf7;
}

.sprites {
    display: none;
}

.ic {
    width: 16px;
    height: 16px;
    flex: none;
    overflow: visible;
}

.ide {
    display: flex;
    flex-direction: column;
    height: 629px;
}

/* main toolbar */
.toolbar {
    display: flex;
    align-items: center;
    flex: none;
    height: 18px;
    padding: 0 0 7px 3px;
    background: linear-gradient(#f5f7fc, #e8ecf7);
}

.tool-icons {
    display: grid;
    grid-auto-flow: column;
    grid-template-columns: 18px 18px 22px 15px 16px 17px 20px 18px 18px 20px 19px 19px 20px 19px 19px 18px 11px 13px 14px 16px 17px 20px 18px 10px 13px 24px 23px 19px 20px 13px 14px 12px 16px 27px 20px 11px 14px 26px 15px 17px 23px 23px 23px 23px 24px 25px 12px 16px 23px 14px 14px 13px 15px 23px 14px 14px 19px 18px 20px 19px 23px 19px 19px 19px 19px;
    align-items: center;
    width: 1192px;
}

.toggle {
    display: flex;
    align-items: center;
    justify-content: center;
    width: 22px;
    height: 20px;
    margin-left: -3px;
    background: #cfe5fb;
    border: 1px solid #93c2f0;
    box-sizing: border-box;
}

.quick-access {
    width: 76px;
    height: 19px;
    margin: -1px 0 0 8px;
    box-sizing: border-box;
    border: 1px solid #8e8e8e;
    background: #fff;
    text-align: center;
    line-height: 17px;
}

.toolbar > .ic:nth-of-type(1) {
    margin-left: -1px;
}

.toolbar > .perspective {
    margin: 0 0 0 5px;
}

/* panels */
.workspace {
    display: grid;
    flex: 1;
    grid-template-columns: 339px 709px 309px;
    grid-template-rows: 442px 157px;
    row-gap: 5px;
    min-height: 0;
}

.panel {
    display: flex;
    flex-direction: column;
    background: #fff;
    overflow: hidden;
    border-radius: 6px 6px 0 0;
}

.explorer {
    grid-row: 1 / span 2;
    border-radius: 0 6px 0 0;
    width: 331px;
}

.editor {
    border: 1px solid #c3cedc;
    box-sizing: border-box;
}

.outline {
    margin-left: 5px;
}

.bottom {
    grid-column: 2 / span 2;
}

.tabbar {
    display: flex;
    flex: none;
    height: 26px;
    background: #f5f7fc;
    position: relative;
}

.tabbar.blue {
    height: 25px;
    background: #cfdeee;
    border-bottom: 1px solid #b4bcc8;
}

.tab {
    display: flex;
    align-items: center;
    height: 26px;
    box-sizing: border-box;
    gap: 4px;
    padding: 1px 0 0 5px;
    color: #222;
    white-space: nowrap;
}

.tab.active {
    background: #fff;
    border-radius: 6px 6px 0 0;
}

.tab.muted {
    color: #8b8b8b;
}

.tab .x {
    width: 13px;
    height: 13px;
    margin-left: 5px;
}

.tab.first {
    width: 126px;
    padding-left: 0;
    gap: 6px;
    background: linear-gradient(90deg, #d6e3f1, #dfe9f4);
    border-radius: 0 8px 0 0;
}

.tab.first > .ic:first-child {
    margin-left: -3px;
}

.tab.first .x {
    margin-left: 0;
}

.tab.file {
    width: 96px;
    padding-left: 3px;
}

.tab.home-tab {
    width: 99px;
}

.tab.result {
    width: 110px;
    height: 26px;
    padding: 0 0 0 3px;
    border: 1px solid #c3cedc;
    border-bottom: none;
}

.tab.result .x {
    margin-left: 2px;
}

.view-tools {
    display: grid;
    grid-auto-flow: column;
    align-items: center;
    position: absolute;
    top: 5px;
}

.explorer-tools {
    left: 180px;
    grid-template-columns: 22px 14px 19px 27px 21px 23px 16px;
}

.editor-tools {
    right: 9px;
    grid-template-columns: 23px 16px;
}

.outline-tools {
    right: 11px;
    grid-template-columns: 29px 20px 23px 16px;
}

.console-tools {
    left: 646px;
    top: 4px;
    grid-template-columns: 24px 22px 24px 14px 16px 24px 23px 23px 23px 13px 18px 24px 17px 20px 19px 18px 23px 16px;
}

/* tree */
.tree-wrap {
    display: flex;
    flex: 1;
    min-height: 0;
    margin-top: 2px;
}

.tree {
    flex: 1;
    margin: 0;
    padding: 0;
    list-style: none;
    overflow: hidden;
}

.row {
    display: flex;
    align-items: center;
    height: 18px;
    white-space: nowrap;
    padding-left: 1px;
}

.l1 { padding-left: 20px; }
.l2 { padding-left: 39px; }
.l3 { padding-left: 58px; }
.l4 { padding-left: 77px; }
.l5 { padding-left: 96px; }
.l6 { padding-left: 115px; }

.ch {
    width: 12px;
    height: 12px;
    flex: none;
    margin-right: 6px;
}

.row > .ic,
.iw {
    margin-right: 5px;
}

.iw {
    position: relative;
    width: 16px;
    height: 16px;
    flex: none;
}

.iw .w {
    position: absolute;
    left: -2px;
    top: 1px;
}

.selected {
    background: #d9d9d9;
    margin-left: -23px;
    padding: 2px 3px 2px 23px;
    line-height: 14px;
}

.vscroll {
    flex: none;
    width: 15px;
    background: #f0f0f0;
    display: flex;
    flex-direction: column;
}

.arrow {
    width: 15px;
    height: 18px;
    flex: none;
}

.tree-scroll .thumb {
    height: 443px;
    background: #cdcdcd;
}

/* browser */
.browser-bar {
    display: flex;
    align-items: center;
    flex: none;
    height: 29px;
    margin: 1px 1px 0 1px;
    padding-left: 5px;
    gap: 7px;
    background: #cfdeee;
}

.url {
    display: flex;
    align-items: center;
    justify-content: space-between;
    width: 543px;
    height: 23px;
    box-sizing: border-box;
    margin-left: 2px;
    padding: 0 4px 0 5px;
    border: 1px solid #777;
    background: #fff;
}

.url-arrow {
    width: 12px;
    height: 12px;
}

.go {
    margin-left: 1px;
}

.eclipse {
    width: 22px;
    height: 22px;
    margin-left: 7px;
}

.page {
    flex: 1;
    padding: 0 9px;
    font-family: "Liberation Serif", serif;
    font-size: 16px;
    background: #fff;
}

.page h1 {
    margin: 21px 0 0;
    color: red;
    font-size: 32px;
    line-height: 38px;
    text-align: center;
}

.page h3 {
    margin: 20px 0 0;
    color: red;
    font-size: 16px;
    line-height: 20px;
}

.results {
    margin-top: 20px;
    border: 1px solid #000;
    border-spacing: 2px;
}

.results th,
.results td {
    border: 1px solid #000;
    padding: 1px;
    line-height: 18.4px;
}

.results th {
    background: aqua;
    padding-top: 2px;
}

.home-link {
    display: block;
    width: fit-content;
    color: purple;
    line-height: 18px;
}

/* outline */
.outline-tab {
    width: 89px;
    background: #eef3fa;
}

.task-tab {
    margin-left: 4px;
}

.no-outline {
    margin: 3px 0 0 4px;
}

/* bottom panel */
.t-markers { width: 71px; padding-left: 4px; }
.t-props { width: 83px; }
.t-servers { width: 67px; }
.t-dse { width: 137px; }
.t-snip { width: 75px; }
.tab.t-console { width: 93px; background: #e4edf6; }
.t-console .x { margin-left: 2px; }

.console-title {
    flex: none;
    height: 19px;
    line-height: 20px;
    padding-left: 2px;
    letter-spacing: -0.18px;
    background: #f5f7fc;
    border-bottom: 1px solid #a8a8a8;
    box-sizing: border-box;
    white-space: nowrap;
}

.console-wrap {
    display: flex;
    flex: 1;
    min-height: 0;
    padding-right: 3px;
}

.console-out {
    flex: 1;
    margin: 0;
    padding: 1px 0 0 4px;
    color: red;
    font-family: "DejaVu Sans Mono", monospace;
    font-size: 11.63px;
    line-height: 15.1px;
    overflow: hidden;
}

.console-scroll {
    position: relative;
}

.console-scroll .thumb {
    position: absolute;
    left: 0;
    right: 0;
    bottom: 4px;
    height: 17px;
    background: #cdcdcd;
}
```
